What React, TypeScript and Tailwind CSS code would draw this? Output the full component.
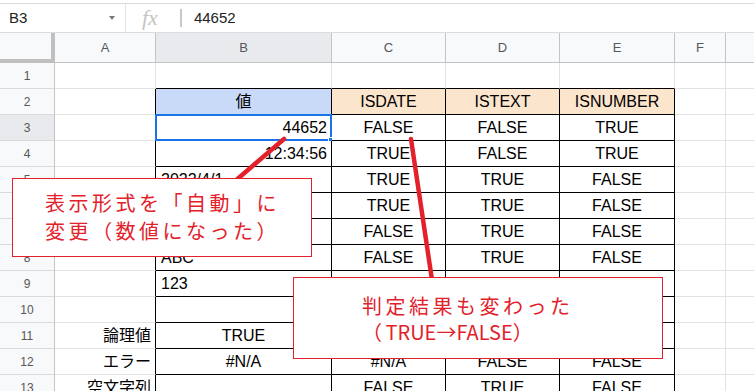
const COL_LETTERS = ["A", "B", "C", "D", "E", "F", ""];

// rows 1..13, columns A..E
const ROWS: string[][] = [
  [],
  ["", "値", "ISDATE", "ISTEXT", "ISNUMBER"],
  ["", "44652", "FALSE", "FALSE", "TRUE"],
  ["", "12:34:56", "TRUE", "FALSE", "TRUE"],
  ["", "2022/4/1", "TRUE", "TRUE", "FALSE"],
  ["", "2022年4月1日", "TRUE", "TRUE", "FALSE"],
  ["", "令和4年4月1日", "FALSE", "TRUE", "FALSE"],
  ["", "ABC", "FALSE", "TRUE", "FALSE"],
  ["", "123", "FALSE", "TRUE", "FALSE"],
  ["", "", "FALSE", "FALSE", "FALSE"],
  ["論理値", "TRUE", "FALSE", "FALSE", "FALSE"],
  ["エラー", "#N/A", "#N/A", "FALSE", "FALSE"],
  ["空文字列", "", "FALSE", "TRUE", "FALSE"],
];

const inTable = (r: number, c: number) => r >= 2 && r <= 13 && c >= 1 && c <= 4;

function align(r: number, c: number) {
  if (c === 0) return "justify-end pr-[4px]";
  if (c === 1 && (r === 3 || r === 4)) return "justify-end pr-[4px]";
  if (c === 1 && r >= 5 && r <= 9) return "justify-start pl-[5px]";
  return "justify-center";
}

function cellBg(r: number, c: number) {
  if (r === 2 && c === 1) return "bg-[#c9daf8]";
  if (r === 2 && c >= 2 && c <= 4) return "bg-[#fce5cd]";
  return "bg-white";
}

function Cell({ r, c }: { r: number; c: number }) {
  const value = ROWS[r - 1][c] ?? "";
  const right = inTable(r, c) || inTable(r, c + 1) ? "border-r-black" : "border-r-[#e2e2e2]";
  const bottom = inTable(r, c) || inTable(r + 1, c) ? "border-b-black" : "border-b-[#e2e2e2]";
  const selected = r === 3 && c === 1;
  return (
    <div
      className={`relative h-[26px] border-r border-b flex items-center whitespace-nowrap overflow-visible text-[16px] text-black ${right} ${bottom} ${cellBg(r, c)} ${align(r, c)}`}
    >
      {value}
      {selected && (
        <>
          <div className="absolute -left-[1px] -top-[1px] -right-[1px] -bottom-[1px] border-2 border-[#1a73e8]" />
          <div className="absolute -right-[4px] -bottom-[4px] w-[7px] h-[7px] bg-[#1a73e8] border border-white" />
        </>
      )}
    </div>
  );
}

export default function App() {
  return (
    <div className="relative w-[754px] h-[391px] overflow-hidden bg-white font-['Liberation_Sans','Noto_Sans_CJK_JP',Arial,sans-serif]">
      {/* formula bar */}
      <div className="mt-[3px] h-[30px] border-t border-b border-[#dadce0] flex items-center">
        <div className="w-[126px] h-full flex items-center pl-[9px] pr-[10px] border-r border-[#e3e3e3]">
          <span className="text-[15px] text-[#222]">B3</span>
          <span className="ml-auto w-0 h-0 border-l-[3.5px] border-r-[3.5px] border-t-[4px] border-l-transparent border-r-transparent border-t-[#777]" />
        </div>
        <span className="ml-[16px] font-['Liberation_Serif',serif] italic text-[22px] text-[#c4c4c4] leading-none">fx</span>
        <div className="ml-[22px] w-[2px] h-[18px] bg-[#c8c8c8]" />
        <span className="ml-[12px] text-[15px] text-[#222]">44652</span>
      </div>

      {/* sheet */}
      <div className="grid grid-cols-[55px_101px_176px_114px_114px_115px_51px_60px]">
        {/* header row */}
        <div className="h-[30px] bg-[#f8f9fa] border-r-4 border-b-4 border-[#c0c0c0]" />
        {COL_LETTERS.map((l, i) => (
          <div
            key={l + i}
            className={`h-[30px] flex items-center justify-center border-r border-b border-[#c4c4c4] text-[13px] text-[#575757] ${i === 1 ? "bg-[#e8eaed]" : "bg-[#f8f9fa]"}`}
          >
            {l}
          </div>
        ))}

        {ROWS.map((_, ri) => {
          const r = ri + 1;
          return [
            <div
              key={`h${r}`}
              className={`h-[26px] flex items-center justify-center border-r border-r-[#c4c4c4] border-b border-b-[#dadada] text-[12px] text-[#575757] ${r === 3 ? "bg-[#e8eaed]" : "bg-[#f8f9fa]"}`}
            >
              {r}
            </div>,
            ...[0, 1, 2, 3, 4, 5, 6].map((c) => <Cell key={`${r}-${c}`} r={r} c={c} />),
          ];
        })}
      </div>

      {/* annotation lines */}
      <svg className="absolute left-0 top-0 pointer-events-none" width="754" height="391">
        <line x1="284" y1="139" x2="234" y2="182" stroke="#e3212b" strokeWidth="4.5" strokeLinecap="round" />
        <line x1="411" y1="139" x2="432" y2="280" stroke="#e3212b" strokeWidth="4.5" strokeLinecap="round" />
      </svg>

      {/* callouts */}
      <div className="absolute left-[12px] top-[178px] w-[300px] h-[79px] bg-white border border-[#e3212b] pl-[32px] pt-[10px] font-['Noto_Sans_CJK_JP',sans-serif] text-[20px] leading-[28px] tracking-[3.5px] text-[#e3212b]">
        <div>表示形式を「自動」に</div>
        <div>変更（数値になった）</div>
      </div>
      <div className="absolute left-[293px] top-[277px] w-[370px] h-[82px] bg-white border border-[#e3212b] pl-[68px] pt-[15px] font-['Noto_Sans_CJK_JP',sans-serif] text-[20px] leading-[26px] tracking-[3.5px] text-[#e3212b]">
        <div>判定結果も変わった</div>
        <div>
          （<span className="tracking-normal">TRUE→FALSE</span>）
        </div>
      </div>
    </div>
  );
}
